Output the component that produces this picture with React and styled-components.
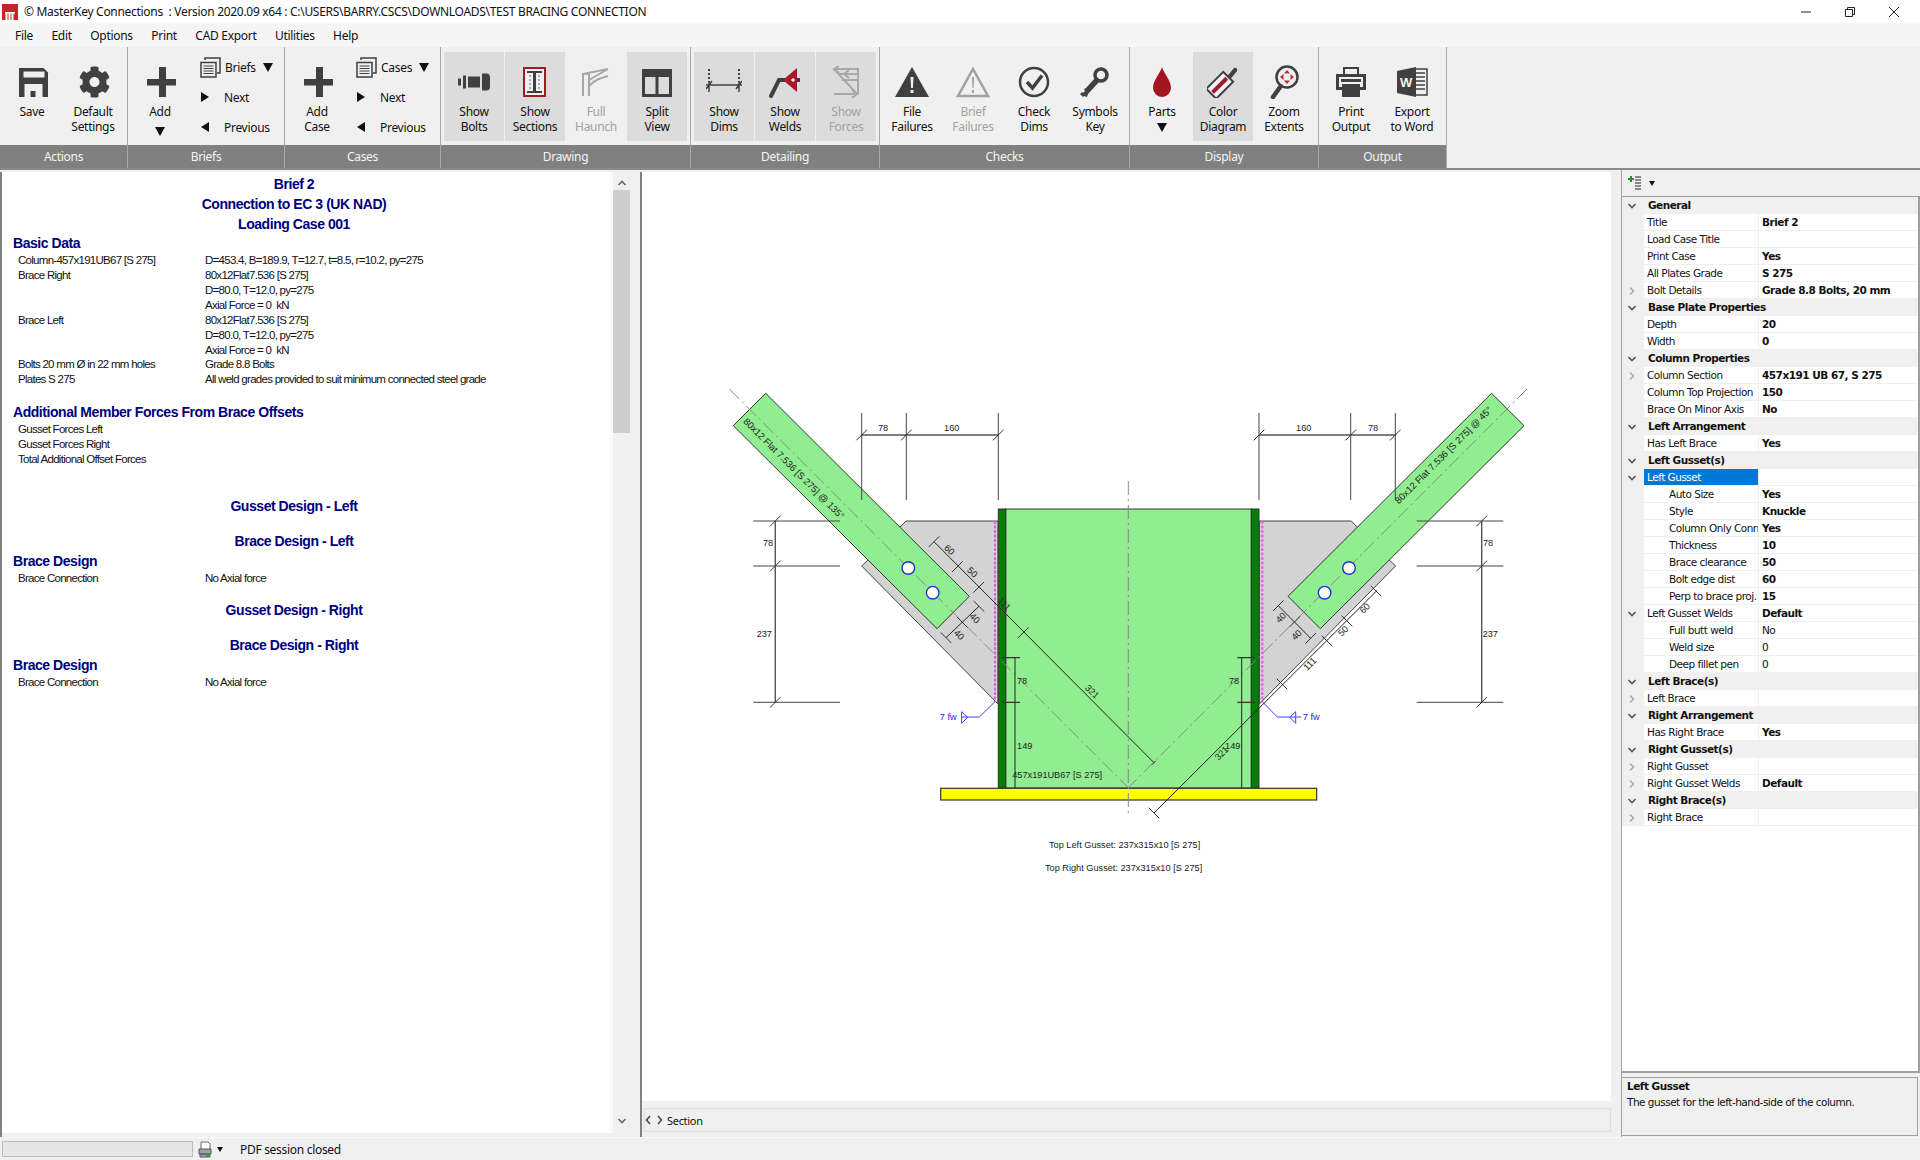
import React from 'react';
import styled, { createGlobalStyle } from 'styled-components';
import { FaCog } from 'react-icons/fa';

const Global = createGlobalStyle`
  html, body { margin: 0; padding: 0; width: 1920px; height: 1160px; overflow: hidden; background: #f0f0f0; }
  * { box-sizing: border-box; }
`;

const Frame = styled.div`
  width: 1920px;
  height: 1160px;
  display: flex;
  flex-direction: column;
  font-family: "Noto Sans", sans-serif;
  font-size: 12px;
  letter-spacing: -0.3px;
  color: #111;
`;

/* title bar */
const TitleBar = styled.div`
  height: 23px;
  background: #fff;
  display: flex;
  align-items: center;
  padding-left: 2px;
`;
const TitleText = styled.div`
  margin-left: 6px;
  white-space: pre;
  flex: 1;
`;
const WinControls = styled.div`
  display: flex;
  height: 23px;
  align-items: center;
  padding-right: 20px;
  gap: 32px;
`;

/* menu */
const MenuBar = styled.div`
  height: 24px;
  background: #f5f5f5;
  display: flex;
  align-items: center;
  padding-left: 15px;
  gap: 18.5px;
`;
const MenuItem = styled.span``;

/* ribbon */
const Ribbon = styled.div`
  height: 121px;
  display: flex;
  background: #f0f0f0;
`;
const Group = styled.div`
  width: ${p => p.$w}px;
  display: flex;
  flex-direction: column;
  border-right: 1px solid #a8a8a8;
`;
const GroupBody = styled.div`
  height: 98px;
  display: flex;
  padding: 5px 0 0 ${p => p.$pad}px;
`;
const Strip = styled.div`
  height: 23px;
  background: #808080;
  color: #f4f4f4;
  display: flex;
  align-items: center;
  justify-content: center;
`;
const Btn = styled.div`
  width: 60px;
  margin-right: 1px;
  height: 89px;
  display: flex;
  flex-direction: column;
  align-items: center;
  padding-top: 13px;
  line-height: 15px;
  text-align: center;
  background: ${p => (p.$on ? '#dcdcdc' : 'transparent')};
  color: ${p => (p.$off ? '#a2a2a2' : '#111')};
`;
const IconSlot = styled.div`
  height: 33px;
  margin-bottom: 6px;
  display: flex;
  align-items: center;
  justify-content: center;
  transform: translateX(${p => p.$dx || 0}px);
`;
const Caret = styled.i`
  display: block;
  width: 0;
  height: 0;
  margin-top: ${p => p.$top ?? 4}px;
  border-left: 5px solid transparent;
  border-right: 5px solid transparent;
  border-top: 9px solid #111;
`;
const ListCaret = styled(Caret)`
  margin-left: 3px;
`;
const SideList = styled.div`
  width: 78px;
  margin-left: ${p => p.$left}px;
  display: flex;
  flex-direction: column;
`;
const SideRow = styled.div`
  height: 30px;
  display: flex;
  align-items: center;
  gap: ${p => p.$gap || 15}px;
  padding-left: 1px;
  &:first-child { gap: 4px; padding-left: 0; }
`;
const Tri = styled.i`
  display: block;
  width: 0;
  height: 0;
  border-top: 5px solid transparent;
  border-bottom: 5px solid transparent;
  ${p => (p.$left ? 'border-right: 8px solid #111;' : 'border-left: 8px solid #111;')}
`;

/* main panes */
const Body = styled.div`
  height: 969px;
  display: flex;
  border-top: 2px solid #8a8a8a;
  background: #f0f0f0;
`;
const LeftPane = styled.div`
  width: 640px;
  height: 965px;
  display: flex;
  border-left: 2px solid #808080;
  margin-top: 2px;
  padding-bottom: 4px;
`;
const Report = styled.div`
  width: 608px;
  background: #fff;
  padding: 2px 24px 0 0;
  font-family: "Liberation Sans", Arial, sans-serif;
`;
const Centre = styled.div`
  height: 20px;
  line-height: 20px;
  margin-top: ${p => p.$top || 0}px;
  text-align: center;
  font-weight: 700;
  font-size: 14px;
  letter-spacing: -0.45px;
  color: #000080;
`;
const Section = styled.div`
  height: 18px;
  line-height: 18px;
  margin-top: ${p => p.$top || 0}px;
  margin-bottom: 1.5px;
  padding-left: 11px;
  font-weight: 700;
  font-size: 14px;
  letter-spacing: -0.45px;
  color: #000080;
`;
const ReportRow = styled.div`
  display: grid;
  grid-template-columns: 187px 1fr;
  padding-left: 16px;
  height: ${p => p.$h || 15}px;
  line-height: 13px;
  font-size: 11.5px;
  letter-spacing: -0.72px;
  white-space: pre;
  color: #111;
`;
const ScrollGutter = styled.div`
  width: 3px;
  background: #fafafa;
`;
const Scroll = styled.div`
  width: 17px;
  display: flex;
  flex-direction: column;
  align-items: center;
  background: #f0f0f0;
  padding-top: 6px;
`;
const Thumb = styled.div`
  width: 17px;
  height: 243px;
  margin-top: 2px;
  background: #cdcdcd;
`;
const ScrollEnd = styled.div`
  margin-top: auto;
  margin-bottom: 3px;
`;
const Splitter = styled.div`
  width: 10px;
  background: #f0f0f0;
`;
const MidPane = styled.div`
  width: 981px;
  height: 965px;
  margin-top: 2px;
  display: flex;
  flex-direction: column;
  border-left: 2px solid #808080;
`;
const Canvas = styled.div`
  width: 969px;
  height: 929px;
  background: #fff;
`;
const TabBar = styled.div`
  width: 967px;
  height: 24px;
  margin: 7px 0 0 2px;
  border: 1px solid #dedede;
  display: flex;
  align-items: center;
  gap: 4px;
`;
const TabText = styled.span`
  font-size: 11px;
`;

/* property grid */
const RightPane = styled.div`
  width: 299px;
  height: 967px;
  display: flex;
  flex-direction: column;
  border-left: 1px solid #a0a0a0;
  font-family: "DejaVu Sans", Tahoma, sans-serif;
  font-size: 10.5px;
`;
const GridBar = styled.div`
  height: 27px;
  display: flex;
  align-items: center;
  padding-left: 6px;
  gap: 3px;
  border-bottom: 1px solid #a0a0a0;
`;
const Grid = styled.div`
  height: 876px;
  background: #fff;
  border-bottom: 2px solid #a0a0a0;
  border-right: 2px solid #a0a0a0;
`;
const GridRow = styled.div`
  height: 17px;
  display: flex;
  background: ${p => (p.$head ? '#f0f0f0' : '#fff')};
  line-height: 16px;
  letter-spacing: -0.5px;
`;
const Gutter = styled.div`
  width: 22px;
  background: #f0f0f0;
  display: flex;
  align-items: center;
  justify-content: center;
  padding-right: 3px;
`;
const HeadText = styled.div`
  padding-left: 4px;
  font-weight: 700;
`;
const NameCell = styled.div`
  width: 115px;
  padding-left: ${p => (p.$indent ? 25 : 3)}px;
  border-bottom: 1px solid #f0f0f0;
  border-right: 1px solid #f0f0f0;
  overflow: hidden;
  white-space: nowrap;
  background: ${p => (p.$sel ? '#0078d7' : 'transparent')};
  color: ${p => (p.$sel ? '#fff' : '#111')};
`;
const ValueCell = styled.div`
  flex: 1;
  padding-left: 3px;
  border-bottom: 1px solid #f0f0f0;
  white-space: nowrap;
  font-weight: ${p => (p.$plain ? 400 : 700)};
`;
const Desc = styled.div`
  height: 59px;
  margin-top: 4px;
  margin-right: 2px;
  padding: 0 5px;
  border: 1px solid #a0a0a0;
  border-left: 0;
  line-height: 16px;
  letter-spacing: -0.5px;
`;
const DescTitle = styled.div`
  font-weight: 700;
`;

/* status */
const Status = styled.div`
  height: 23px;
  flex: none;
  margin-top: auto;
  display: flex;
  align-items: center;
  padding-left: 2px;
  border-top: 1px solid #fafafa;
`;
const Progress = styled.div`
  width: 191px;
  height: 16px;
  background: #e6e6e6;
  border: 1px solid #bcbcbc;
`;
const PrinterSlot = styled.div`
  margin-left: 4px;
  height: 17px;
`;
const StatusText = styled.span`
  margin-left: 17px;
`;
const StatusCaret = styled.i`
  display: block;
  margin-left: 4px;
  width: 0;
  height: 0;
  border-left: 3px solid transparent;
  border-right: 3px solid transparent;
  border-top: 5px solid #111;
`;

/* drawing text */
const DimText = styled.text`
  font-family: "Liberation Sans", Arial, sans-serif;
  font-size: ${p => p.$size || 9.2}px;
  letter-spacing: 0;
  fill: ${p => p.$fill || '#222'};
  text-anchor: middle;
  dominant-baseline: central;
`;

const dark = '#404040';

const Ic = ({ w = 32, h = 32, children }) => (
  <svg width={w} height={h} viewBox={`0 0 ${w} ${h}`}>{children}</svg>
);

const SaveIcon = () => (
  <Ic>
    <path fill={dark} d="M1.5 2H26l4.5 4.5V31H1.5z" />
    <path fill="#f0f0f0" d="M6 5.5h21v6H6zM7 18h18v13H7z" />
    <path fill={dark} d="M13 25h5v6h-5z" />
  </Ic>
);
const PlusIcon = () => (
  <Ic>
    <path fill={dark} d="M13 1h7v12h10v6.5H20V31h-7V19.5H1V13h12z" />
  </Ic>
);
const StackIcon = () => (
  <Ic w={21} h={21}>
    <path fill="none" stroke={dark} strokeWidth="1.5" d="M5 3V1h15v15h-3M3 5.5h13v14.5H1V5.5z" />
    <path stroke={dark} strokeWidth="1.2" d="M3.5 9h10M3.5 11.5h10M3.5 14h10M3.5 16.5h10" />
  </Ic>
);
const BoltsIcon = () => (
  <Ic h={20}>
    <path fill={dark} d="M0 6.5h3v7H0zM5 3.5h3v13H5zM10 4.5h12v11H10zM24 1.5h5c2 0 3 2 3 4v9c0 2-1 4-3 4h-5z" />
  </Ic>
);
const SectionsIcon = () => (
  <Ic w={24}>
    <rect x="1" y="2" width="21" height="28" fill="#f0f0f0" stroke="#9e1b20" strokeWidth="2" />
    <path fill={dark} d="M4 5h15v2h-6v18h6v2H4v-2h6V7H4z" />
    {[10, 14, 18, 22].map(y => (
      <g key={y} fill="#999">
        <circle cx="7" cy={y} r="1.1" />
        <circle cx="16" cy={y} r="1.1" />
      </g>
    ))}
  </Ic>
);
const HaunchIcon = () => (
  <Ic>
    <path fill="none" stroke="#a8a8a8" strokeWidth="2" d="M3 30V8h6v22M9 14L28 3M9 20c5-6 12-8 19-10M3 8l25-5" />
  </Ic>
);
const SplitIcon = () => (
  <Ic>
    <path fill={dark} d="M1 3h30v28H1zM4 11v17h10.500V11zM17.500 11v17H28V11z" fillRule="evenodd" />
  </Ic>
);
const DimsIcon = () => (
  <Ic w={36}>
    <path stroke={dark} strokeWidth="2" strokeDasharray="2 2" d="M3 3v13M33 3v13" />
    <path stroke={dark} strokeWidth="1.5" d="M0 19h36M3 16v10M33 16v10M0 23l6-8M30 23l6-8" />
  </Ic>
);
const WeldsIcon = () => (
  <Ic>
    <path fill="none" stroke={dark} strokeWidth="4" strokeLinecap="round" d="M2 30L10 14h6" />
    <path fill="#a5182a" d="M28 2v24L14 14z" />
    <circle cx="24" cy="14" r="1.8" fill="#f0f0f0" />
    <path fill={dark} d="M28 12h3v4h-3z" />
  </Ic>
);
const ForcesIcon = () => (
  <Ic w={28}>
    <g fill="none" stroke="#a8a8a8" strokeWidth="2">
      <path d="M2 3h24v26M2 3l23 25M26 14H10M26 8H6M2 28h22" />
      <path d="M7 0L2 3l5 4M17 4l-5 4 5 4M20 24l5 4-5 4" />
    </g>
  </Ic>
);
const WarnIcon = () => (
  <Ic w={36}>
    <path fill={dark} d="M18 1l17 30H1z" />
    <path fill="#f0f0f0" d="M16.500 11h3l-.6 11h-1.800zM16.500 24h3v3h-3z" />
  </Ic>
);
const WarnOffIcon = () => (
  <Ic w={36}>
    <path fill="none" stroke="#a0a0a0" strokeWidth="2.500" d="M18 3l15 27H3z" />
    <path fill="#a0a0a0" d="M17 11h2l-.4 11h-1.200zM17 24h2v3h-2z" />
  </Ic>
);
const CheckIcon = () => (
  <Ic>
    <circle cx="16" cy="16" r="14" fill="none" stroke={dark} strokeWidth="2.500" />
    <path fill="none" stroke={dark} strokeWidth="3.500" d="M9 16l5.500 6L24 9.500" />
  </Ic>
);
const KeyIcon = () => (
  <Ic>
    <circle cx="22" cy="9" r="6" fill="none" stroke={dark} strokeWidth="3.500" />
    <path fill={dark} d="M16 12l4 4L9 28l-1 3-3-1-1 1-3-3 2-2 1 1 2-2-1-2 2-1z" />
  </Ic>
);
const DropIcon = () => (
  <Ic w={20}>
    <path fill="#a3161f" d="M10 1c1 5 9 13 9 21a9 9 0 0 1-18 0C1 14 9 6 10 1z" />
  </Ic>
);
const RollerIcon = () => (
  <Ic>
    <path fill={dark} d="M18 13l9-11c2-1 4 1 3 3l-9 11z" />
    <g transform="rotate(45 12 20) translate(5 7)">
      <rect x="0" y="0" width="14" height="24" fill="#f0f0f0" stroke={dark} strokeWidth="2" />
      <rect x="5" y="2" width="4" height="20" fill="#a5182a" />
    </g>
  </Ic>
);
const ZoomIcon = () => (
  <Ic h={34}>
    <circle cx="19" cy="12" r="10.500" fill="#f0f0f0" stroke={dark} strokeWidth="2.500" />
    <path fill="#bd2a30" d="M19 5l3 3.500h-6zM19 19l3-3.500h-6zM12 12l3.500-3v6zM26 12l-3.500-3v6z" />
    <path stroke={dark} strokeWidth="4.500" strokeLinecap="round" d="M12.500 21.500L5 32" />
  </Ic>
);
const PrintIcon = () => (
  <Ic>
    <path fill="none" stroke={dark} strokeWidth="2" d="M9 9V2h14v7" />
    <path fill={dark} d="M1 8h30v16h-6v7H7v-7H1zM4 11v10h3v-3h18v3h3V11zM6 13h20v3H6z" fillRule="evenodd" />
  </Ic>
);
const WordIcon = () => (
  <Ic>
    <path fill="#f0f0f0" stroke={dark} strokeWidth="1.500" d="M16 3h15v26H16z" />
    <path stroke={dark} strokeWidth="1.600" d="M19 7h10M19 11h10M19 15h10M19 19h10M19 23h10" />
    <path fill={dark} d="M1 5L20 1v30L1 27z" />
    <text x="10" y="20.500" textAnchor="middle" fill="#f4f4f4" fontFamily="Liberation Sans" fontWeight="700" fontSize="13">W</text>
  </Ic>
);

const chevrons = {
  down: 'M1.500 3L5 6.500 8.500 3',
  right: 'M3 1.500L6.500 5 3 8.500',
  up: 'M1.500 7L5 3.500 8.500 7',
};
const Chevron = ({ dir, color }) => (
  <svg width="10" height="10" viewBox="0 0 10 10">
    <path fill="none" stroke={color || (dir === 'down' ? '#555' : '#aaa')} strokeWidth="1.600" d={chevrons[dir]} />
  </svg>
);

/* drawing helpers */
const M = 2257.3;
const Ln = ({ d, c = '#333', w = 1, dash }) => <path d={d} fill="none" stroke={c} strokeWidth={w} strokeDasharray={dash} />;
const Tick = ({ x, y, s = 5.3, flip }) => (
  <path d={flip ? `M${x - s} ${y - s}L${x + s} ${y + s}` : `M${x - s} ${y + s}L${x + s} ${y - s}`} stroke="#333" strokeWidth="1" fill="none" />
);
const Lbl = ({ x, y, a, size, fill, children }) => (
  <DimText x={x} y={y} $size={size} $fill={fill} transform={a ? `rotate(${a} ${x} ${y})` : undefined}>{children}</DimText>
);

const Drawing = () => (
  <svg width="969" height="929" viewBox="642 172 969 929">
    {/* gussets */}
    <path d="M906 521H998V704L861.7 566 873 555Z" fill="#d3d3d3" stroke="#444" strokeWidth="1" />
    <path d={`M${M - 906} 521H${M - 998}V704L${M - 861.7} 566 ${M - 873} 555Z`} fill="#d3d3d3" stroke="#444" strokeWidth="1" />
    <Ln d="M995 521V702" c="#e25fe2" w={2} dash="3 1.5" />
    <Ln d="M1262.3 521V702" c="#e25fe2" w={2} dash="3 1.5" />
    {/* column */}
    <rect x="1005.7" y="509" width="245.6" height="279" fill="#90ee90" stroke="#333" strokeWidth="1" />
    <rect x="998.3" y="509" width="7.4" height="279" fill="#008000" stroke="#333" strokeWidth="1" />
    <rect x="1251.3" y="509" width="7.7" height="279" fill="#008000" stroke="#333" strokeWidth="1" />
    {/* base plate */}
    <rect x="940.7" y="788.3" width="376" height="11.7" fill="#ffff00" stroke="#333" strokeWidth="1.2" />
    {/* braces */}
    <path d="M765.7 393.3L733.3 425.7 937 628.7 969.3 596.3Z" fill="#90ee90" stroke="#333" strokeWidth="1" />
    <path d={`M${M - 765.7} 393.3L${M - 733.3} 425.7 ${M - 937} 628.7 ${M - 969.3} 596.3Z`} fill="#90ee90" stroke="#333" strokeWidth="1" />
    {/* centre lines */}
    <Ln d="M729.3 389L1128.3 787.7" c="#888" dash="14 4 2 4" />
    <Ln d="M1527 389L1128.3 787.7" c="#888" dash="14 4 2 4" />
    <Ln d="M1128.3 481V817" c="#888" dash="14 4 2 4" />
    {/* bolts */}
    {[[908.3, 568], [932.7, 592.7], [M - 908.3, 568], [M - 932.7, 592.7]].map(([x, y]) => (
      <circle key={x} cx={x} cy={y} r="6.3" fill="#fff" stroke="#2030d0" strokeWidth="1.4" />
    ))}
    {/* top dims left */}
    <Ln d="M861.7 435H998.3" c="#555" w={1.4} />
    <Ln d="M861.7 413V500M906.3 413V500M998.3 413V500" c="#444" />
    <Tick x={861.7} y={435} /><Tick x={906.3} y={435} /><Tick x={998.3} y={435} />
    <Lbl x={883} y={428.3}>78</Lbl>
    <Lbl x={951.7} y={428.3}>160</Lbl>
    {/* top dims right */}
    <Ln d="M1259 435H1395.3" c="#555" w={1.4} />
    <Ln d="M1259 413V500M1350.7 413V500M1395.3 413V500" c="#444" />
    <Tick x={1259} y={435} /><Tick x={1350.7} y={435} /><Tick x={1395.3} y={435} />
    <Lbl x={1303.7} y={428.3}>160</Lbl>
    <Lbl x={1373} y={428.3}>78</Lbl>
    {/* side dims left */}
    <Ln d="M753.3 521H840M753.3 566H840M753.3 702.3H840" c="#444" />
    <Ln d="M775.3 521V702.3" c="#555" w={1.4} />
    <Tick x={775.3} y={521} /><Tick x={775.3} y={566} /><Tick x={775.3} y={702.3} />
    <Lbl x={768} y={543.3}>78</Lbl>
    <Lbl x={764.3} y={634.3}>237</Lbl>
    {/* side dims right */}
    <Ln d="M1416.7 521H1503.3M1416.7 566H1503.3M1416.7 702.3H1503.3" c="#444" />
    <Ln d="M1481.7 521V702.3" c="#555" w={1.4} />
    <Tick x={1481.7} y={521} /><Tick x={1481.7} y={566} /><Tick x={1481.7} y={702.3} />
    <Lbl x={1488} y={543.3}>78</Lbl>
    <Lbl x={1490.3} y={634.3}>237</Lbl>
    {/* long dims on brace edges */}
    <Ln d="M934 541.7L1154 762.7" c="#222" />
    <Ln d="M1377 590.5L1154 813" c="#222" />
    <Tick x={934} y={541.7} /><Tick x={957.3} y={566.7} /><Tick x={978.7} y={587.3} /><Tick x={1023.3} y={632.7} />
    <Tick x={1154} y={762.7} s={2} />
    <Tick x={1376} y={591} flip /><Tick x={1347} y={621} flip /><Tick x={1327} y={641} flip /><Tick x={1282} y={684} flip /><Tick x={1154} y={813} flip />
    <Lbl x={949.3} y={550} a={45}>60</Lbl>
    <Lbl x={972.3} y={572.3} a={45}>50</Lbl>
    <Lbl x={1004} y={604} a={45}>111</Lbl>
    <Lbl x={1092} y={691.7} a={45}>321</Lbl>
    <Lbl x={1365} y={608.3} a={-45}>60</Lbl>
    <Lbl x={1343.3} y={631} a={-45}>50</Lbl>
    <Lbl x={1310} y={664} a={-45}>111</Lbl>
    <Lbl x={1221.7} y={753.3} a={-45}>321</Lbl>
    {/* 40 dims */}
    <Ln d="M979 606.3L946 637.7" c="#222" />
    <Tick x={979} y={606.3} flip /><Tick x={962.3} y={622.3} flip /><Tick x={946} y={637.7} flip />
    <Lbl x={974.7} y={618.3} a={45}>40</Lbl>
    <Lbl x={959} y={635} a={45}>40</Lbl>
    <Ln d="M1278.3 605.7L1310.7 638.3" c="#222" />
    <Tick x={1278.3} y={605.7} /><Tick x={1294.7} y={621.7} /><Tick x={1310.7} y={638.3} />
    <Lbl x={1281} y={617.7} a={-45}>40</Lbl>
    <Lbl x={1296.7} y={635} a={-45}>40</Lbl>
    {/* column dims */}
    <Ln d="M1002 657.7H1020M1002 702.3H1020" c="#333" w={1.3} />
    <Ln d="M1015 657.7V788" c="#222" />
    <Ln d="M1237.3 657.7H1255M1237.3 702.3H1255" c="#333" w={1.3} />
    <Ln d="M1241.7 657.7V788" c="#222" />
    <Lbl x={1022} y={680.7}>78</Lbl>
    <Lbl x={1024.7} y={745.7}>149</Lbl>
    <Lbl x={1234} y={680.7}>78</Lbl>
    <Lbl x={1232.7} y={745.7}>149</Lbl>
    <Lbl x={1057.2} y={775.2}>457x191UB67 [S 275]</Lbl>
    {/* brace labels */}
    <Lbl x={794} y={468.3} a={45} size={9.5}>80x12 Flat 7.536 [S 275] @ 135°</Lbl>
    <Lbl x={1443.3} y={455} a={-45} size={9.5}>80x12 Flat 7.536 [S 275] @ 45°</Lbl>
    {/* welds */}
    <Ln d="M961 717H979.3L995 701.7" c="#4040ff" />
    <path d="M961.7 711.7L967.7 717.3 961.7 723.3Z" fill="none" stroke="#4040ff" />
    <Lbl x={948.3} y={717.3} fill="#2020ff">7 fw</Lbl>
    <Ln d="M1301 717H1277.3L1262.3 701.7" c="#4040ff" />
    <path d="M1295.7 711.7L1289.7 717.3 1295.7 723.3Z" fill="none" stroke="#4040ff" />
    <Lbl x={1311.3} y={717.3} fill="#2020ff">7 fw</Lbl>
    {/* captions */}
    <Lbl x={1124.6} y={844.7}>Top Left Gusset: 237x315x10 [S 275]</Lbl>
    <Lbl x={1123.6} y={867.7}>Top Right Gusset: 237x315x10 [S 275]</Lbl>
  </svg>
);

const rows = [
  { head: 'General' },
  { n: 'Title', v: 'Brief 2' },
  { n: 'Load Case Title' },
  { n: 'Print Case', v: 'Yes' },
  { n: 'All Plates Grade', v: 'S 275' },
  { n: 'Bolt Details', v: 'Grade 8.8 Bolts, 20 mm', more: true },
  { head: 'Base Plate Properties' },
  { n: 'Depth', v: '20' },
  { n: 'Width', v: '0' },
  { head: 'Column Properties' },
  { n: 'Column Section', v: '457x191 UB 67, S 275', more: true },
  { n: 'Column Top Projection', v: '150' },
  { n: 'Brace On Minor Axis', v: 'No' },
  { head: 'Left Arrangement' },
  { n: 'Has Left Brace', v: 'Yes' },
  { head: 'Left Gusset(s)' },
  { n: 'Left Gusset', sel: true, open: true },
  { n: 'Auto Size', v: 'Yes', indent: true },
  { n: 'Style', v: 'Knuckle', indent: true },
  { n: 'Column Only Conn', v: 'Yes', indent: true },
  { n: 'Thickness', v: '10', indent: true },
  { n: 'Brace clearance', v: '50', indent: true },
  { n: 'Bolt edge dist', v: '60', indent: true },
  { n: 'Perp to brace proj.', v: '15', indent: true },
  { n: 'Left Gusset Welds', v: 'Default', open: true },
  { n: 'Full butt weld', v: 'No', indent: true, plain: true },
  { n: 'Weld size', v: '0', indent: true, plain: true },
  { n: 'Deep fillet pen', v: '0', indent: true, plain: true },
  { head: 'Left Brace(s)' },
  { n: 'Left Brace', more: true },
  { head: 'Right Arrangement' },
  { n: 'Has Right Brace', v: 'Yes' },
  { head: 'Right Gusset(s)' },
  { n: 'Right Gusset', more: true },
  { n: 'Right Gusset Welds', v: 'Default', more: true },
  { head: 'Right Brace(s)' },
  { n: 'Right Brace', more: true },
];

const Button = ({ icon, label, on, off, caret, dx }) => (
  <Btn $on={on} $off={off}>
    <IconSlot $dx={dx}>{icon}</IconSlot>
    {label.map(l => <span key={l}>{l}</span>)}
    {caret !== undefined && <Caret $top={caret} />}
  </Btn>
);

const Row = ({ a, b, h }) => (
  <ReportRow $h={h}>
    <span>{a}</span>
    <span>{b}</span>
  </ReportRow>
);

const Navigator = ({ name, left }) => (
  <SideList $left={left}>
    <SideRow>
      <StackIcon />
      <span>{name}</span>
      <ListCaret $top={0} />
    </SideRow>
    <SideRow><Tri /><span>Next</span></SideRow>
    <SideRow><Tri $left /><span>Previous</span></SideRow>
  </SideList>
);

const App = () => (
  <Frame>
    <Global />
    <TitleBar>
      <svg width="16" height="16" viewBox="0 0 16 16">
        <rect width="16" height="16" fill="#c1272d" />
        <path fill="#fff" d="M3 8h10v1.500h-1.500V16h-2V9.500H8.500V16h-2V9.500H5.500V16h-2V9.500H3z" />
      </svg>
      <TitleText>© MasterKey Connections  : Version 2020.09 x64 : C:\USERS\BARRY.CSCS\DOWNLOADS\TEST BRACING CONNECTION</TitleText>
      <WinControls>
        <svg width="12" height="12" viewBox="0 0 12 12"><path d="M1 6h10" stroke="#222" fill="none" /></svg>
        <svg width="12" height="12" viewBox="0 0 12 12"><path d="M1.500 3.500h7v7h-7zM3.500 3.500v-2h7v7h-2" stroke="#222" fill="none" /></svg>
        <svg width="12" height="12" viewBox="0 0 12 12"><path d="M1 1l10 10M11 1L1 11" stroke="#222" fill="none" /></svg>
      </WinControls>
    </TitleBar>
    <MenuBar>
      {['File', 'Edit', 'Options', 'Print', 'CAD Export', 'Utilities', 'Help'].map(m => <MenuItem key={m}>{m}</MenuItem>)}
    </MenuBar>
    <Ribbon>
      <Group $w={128}>
        <GroupBody $pad={2}>
          <Button dx={1.5} icon={<SaveIcon />} label={['Save']} />
          <Button dx={1.5} icon={<FaCog size={32} color={dark} />} label={['Default', 'Settings']} />
        </GroupBody>
        <Strip>Actions</Strip>
      </Group>
      <Group $w={157}>
        <GroupBody $pad={2}>
          <Button dx={2} icon={<PlusIcon />} label={['Add']} caret={8} />
          <Navigator name="Briefs" left={9} />
        </GroupBody>
        <Strip>Briefs</Strip>
      </Group>
      <Group $w={156}>
        <GroupBody $pad={2}>
          <Button dx={2} icon={<PlusIcon />} label={['Add', 'Case']} />
          <Navigator name="Cases" left={8} />
        </GroupBody>
        <Strip>Cases</Strip>
      </Group>
      <Group $w={250}>
        <GroupBody $pad={3}>
          <Button on icon={<BoltsIcon />} label={['Show', 'Bolts']} />
          <Button on icon={<SectionsIcon />} label={['Show', 'Sections']} />
          <Button off icon={<HaunchIcon />} label={['Full', 'Haunch']} />
          <Button on icon={<SplitIcon />} label={['Split', 'View']} />
        </GroupBody>
        <Strip>Drawing</Strip>
      </Group>
      <Group $w={189}>
        <GroupBody $pad={3}>
          <Button on icon={<DimsIcon />} label={['Show', 'Dims']} />
          <Button on icon={<WeldsIcon />} label={['Show', 'Welds']} />
          <Button on off icon={<ForcesIcon />} label={['Show', 'Forces']} />
        </GroupBody>
        <Strip>Detailing</Strip>
      </Group>
      <Group $w={250}>
        <GroupBody $pad={2}>
          <Button icon={<WarnIcon />} label={['File', 'Failures']} />
          <Button off icon={<WarnOffIcon />} label={['Brief', 'Failures']} />
          <Button icon={<CheckIcon />} label={['Check', 'Dims']} />
          <Button icon={<KeyIcon />} label={['Symbols', 'Key']} />
        </GroupBody>
        <Strip>Checks</Strip>
      </Group>
      <Group $w={189}>
        <GroupBody $pad={2}>
          <Button icon={<DropIcon />} label={['Parts']} caret={4} />
          <Button on icon={<RollerIcon />} label={['Color', 'Diagram']} />
          <Button icon={<ZoomIcon />} label={['Zoom', 'Extents']} />
        </GroupBody>
        <Strip>Display</Strip>
      </Group>
      <Group $w={128}>
        <GroupBody $pad={2}>
          <Button icon={<PrintIcon />} label={['Print', 'Output']} />
          <Button icon={<WordIcon />} label={['Export', 'to Word']} />
        </GroupBody>
        <Strip>Output</Strip>
      </Group>
    </Ribbon>
    <Body>
      <LeftPane>
        <Report>
          <Centre>Brief 2</Centre>
          <Centre>Connection to EC 3 (UK NAD)</Centre>
          <Centre>Loading Case 001</Centre>
          <Section>Basic Data</Section>
          <Row a="Column-457x191UB67 [S 275]" b="D=453.4, B=189.9, T=12.7, t=8.5, r=10.2, py=275" />
          <Row a="Brace Right" b="80x12Flat7.536 [S 275]" />
          <Row b="D=80.0, T=12.0, py=275" />
          <Row b="Axial Force = 0  kN" />
          <Row a="Brace Left" b="80x12Flat7.536 [S 275]" />
          <Row b="D=80.0, T=12.0, py=275" />
          <Row h={14} b="Axial Force = 0  kN" />
          <Row a="Bolts 20 mm Ø in 22 mm holes" b="Grade 8.8 Bolts" />
          <Row a="Plates S 275" b="All weld grades provided to suit minimum connected steel grade" />
          <Section $top={15.5}>Additional Member Forces From Brace Offsets</Section>
          <Row a="Gusset Forces Left" />
          <Row a="Gusset Forces Right" />
          <Row a="Total Additional Offset Forces" />
          <Centre $top={28.5}>Gusset Design - Left</Centre>
          <Centre $top={15}>Brace Design - Left</Centre>
          <Section $top={1}>Brace Design</Section>
          <Row a="Brace Connection" b="No Axial force" />
          <Centre $top={13.5}>Gusset Design - Right</Centre>
          <Centre $top={15}>Brace Design - Right</Centre>
          <Section $top={1}>Brace Design</Section>
          <Row a="Brace Connection" b="No Axial force" />
        </Report>
        <ScrollGutter />
        <Scroll>
          <Chevron dir="up" color="#666" />
          <Thumb />
          <ScrollEnd><Chevron dir="down" color="#666" /></ScrollEnd>
        </Scroll>
        <Splitter />
      </LeftPane>
      <MidPane>
        <Canvas><Drawing /></Canvas>
        <TabBar>
          <svg width="18" height="12" viewBox="0 0 18 12">
            <path d="M5 2L1.500 6 5 10M13 2l3.500 4-3.500 4" fill="none" stroke="#445" strokeWidth="1.500" />
          </svg>
          <TabText>Section</TabText>
        </TabBar>
      </MidPane>
      <RightPane>
        <GridBar>
          <svg width="14" height="14" viewBox="0 0 14 14">
            <path d="M0 3h6M3 0v6" stroke="#1a9a1a" strokeWidth="2" />
            <path d="M7 1h6M7 4h6M7 7h6M7 10h6M7 13h6" stroke="#222" strokeWidth="1" />
          </svg>
          <StatusCaret />
        </GridBar>
        <Grid>
          {rows.map((r, i) => (r.head ? (
            <GridRow key={i} $head>
              <Gutter><Chevron dir="down" /></Gutter>
              <HeadText>{r.head}</HeadText>
            </GridRow>
          ) : (
            <GridRow key={i}>
              <Gutter>{(r.more || r.open) && <Chevron dir={r.open ? 'down' : 'right'} />}</Gutter>
              <NameCell $indent={r.indent} $sel={r.sel}>{r.n}</NameCell>
              <ValueCell $plain={r.plain}>{r.v}</ValueCell>
            </GridRow>
          )))}
        </Grid>
        <Desc>
          <DescTitle>Left Gusset</DescTitle>
          The gusset for the left-hand-side of the column.
        </Desc>
      </RightPane>
    </Body>
    <Status>
      <Progress />
      <PrinterSlot>
        <svg width="16" height="17" viewBox="0 0 16 17">
          <path d="M4 1h7l2 2v6H4z" fill="#fff" stroke="#667" />
          <path d="M2 8h12v5H2zM3 13h10v3H3z" fill="#9aa3ad" stroke="#556" />
          <rect x="9" y="13" width="4" height="3" fill="#1eb01e" />
        </svg>
      </PrinterSlot>
      <StatusCaret />
      <StatusText>PDF session closed</StatusText>
    </Status>
  </Frame>
);

export default App;
